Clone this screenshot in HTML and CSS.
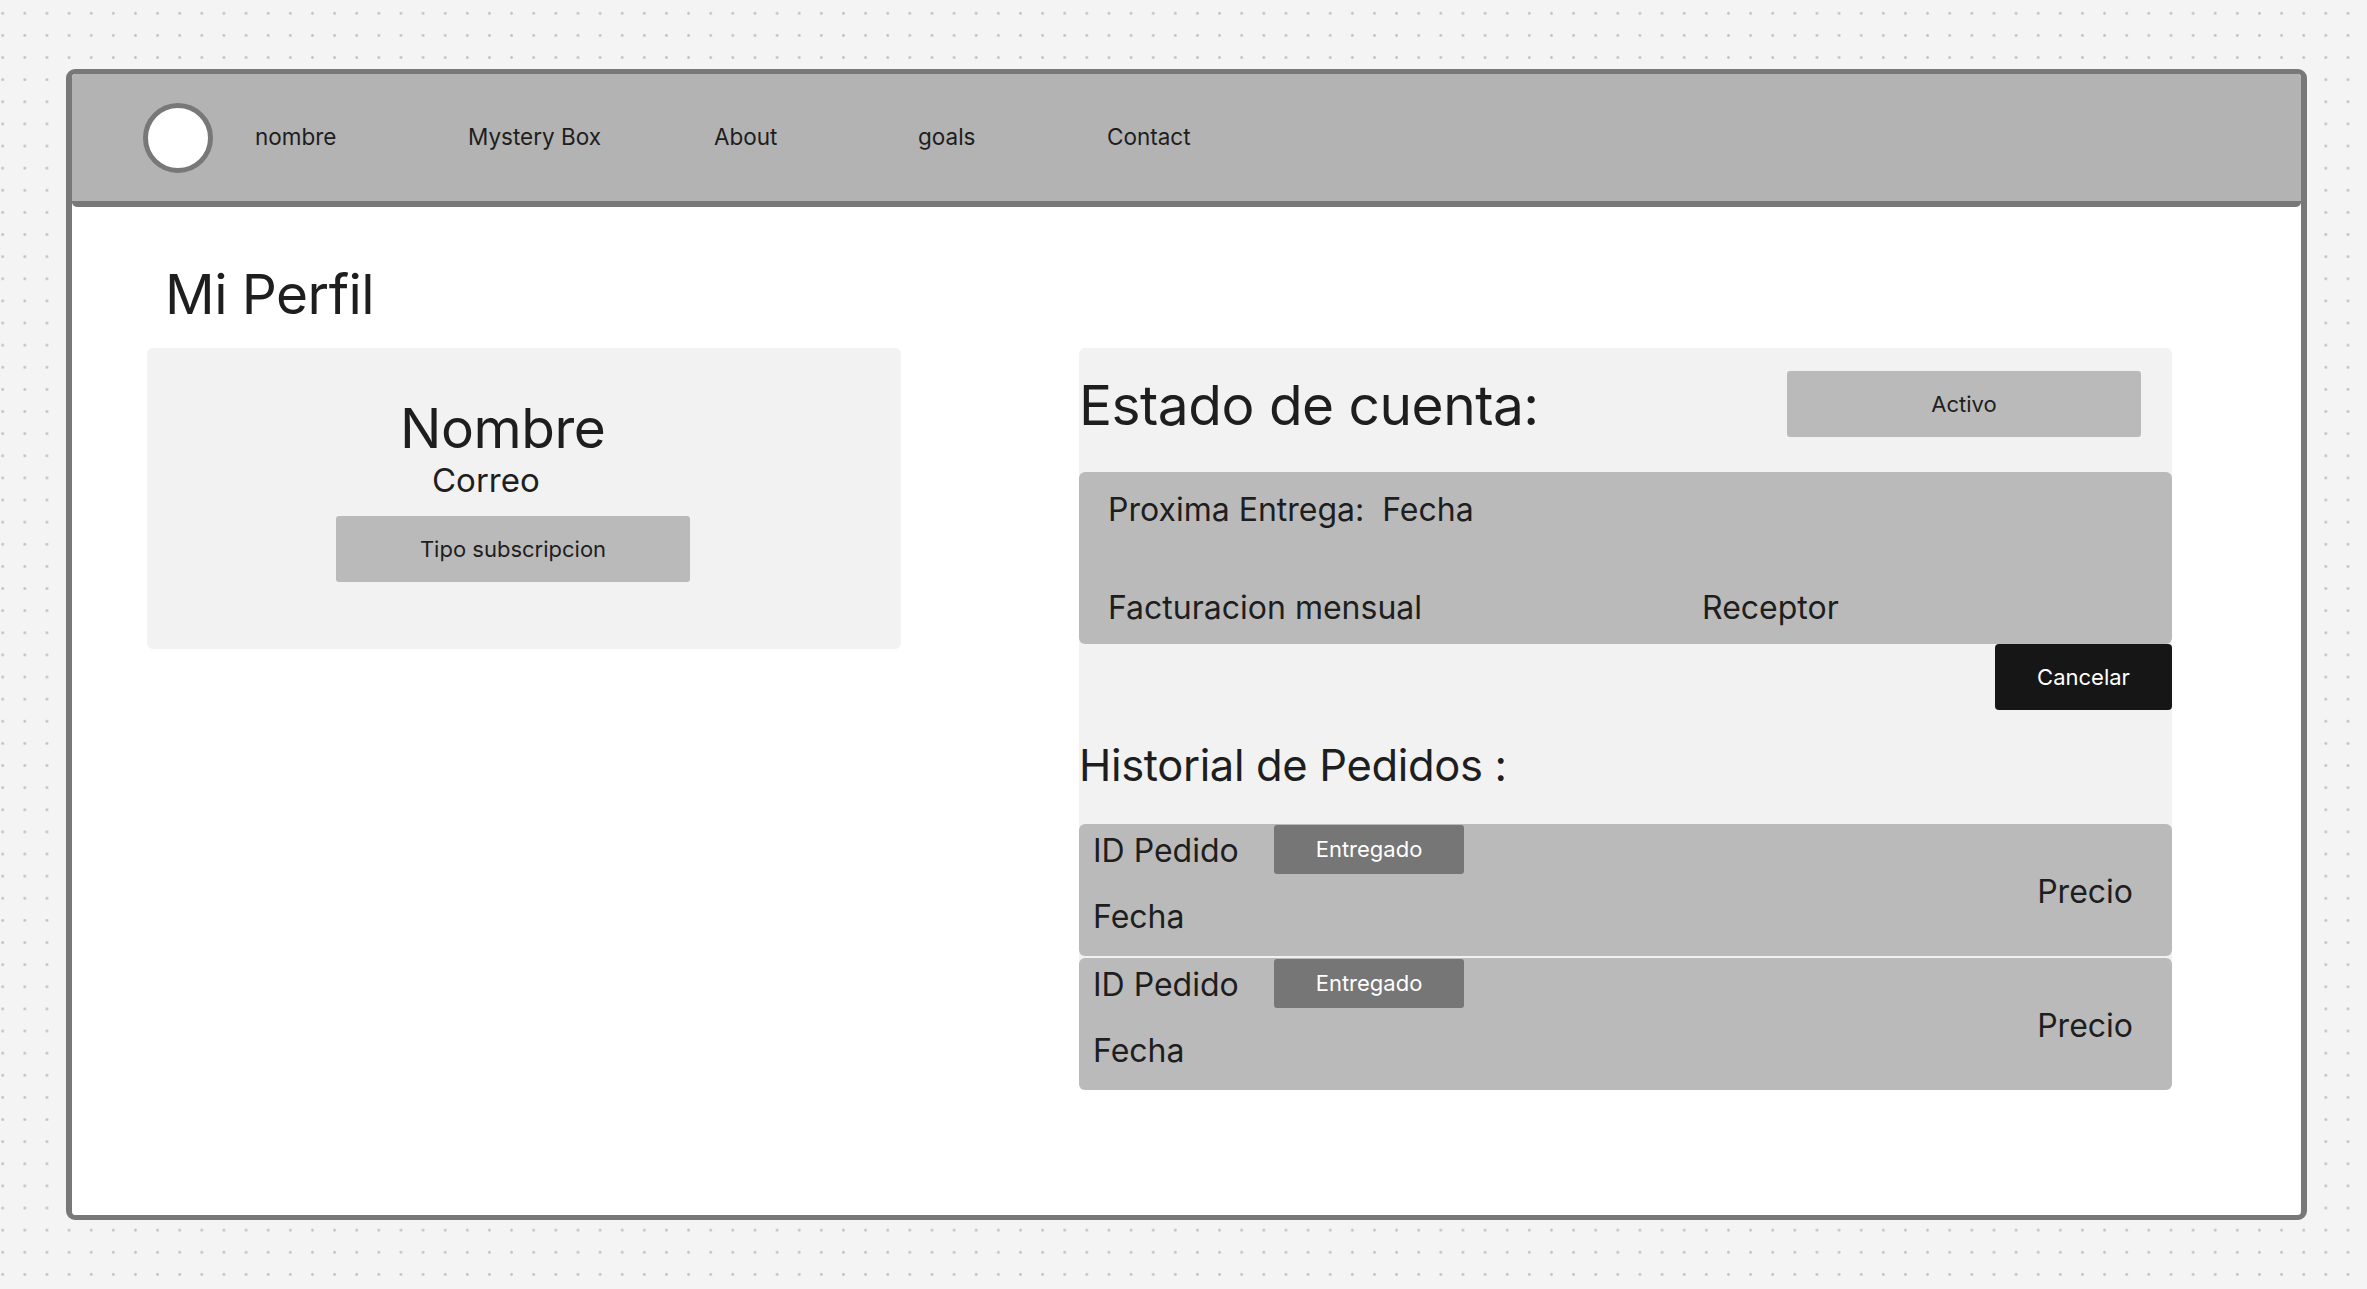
FILE: index.html
```html
<!DOCTYPE html>
<html lang="es">
<head>
<meta charset="utf-8">
<title>Mi Perfil</title>
<link rel="stylesheet" href="styles.css">
</head>
<body>
  <div class="frame">
    <header class="nav">
      <div class="avatar"></div>
      <nav class="links">
        <a class="link">nombre</a>
        <a class="link">Mystery Box</a>
        <a class="link">About</a>
        <a class="link">goals</a>
        <a class="link">Contact</a>
      </nav>
    </header>
    <main class="content">
      <h1 class="page-title">Mi Perfil</h1>
      <div class="columns">
        <section class="profile-card">
          <h2 class="profile-name">Nombre</h2>
          <p class="profile-email">Correo</p>
          <div class="btn btn-gray profile-plan">Tipo subscripcion</div>
        </section>
        <section class="account">
          <div class="account-head">
            <h2 class="section-title">Estado de cuenta:</h2>
            <div class="btn btn-gray status">Activo</div>
          </div>
          <div class="delivery">
            <p class="delivery-next">Proxima Entrega:&nbsp; Fecha</p>
            <div class="delivery-row">
              <span>Facturacion mensual</span>
              <span>Receptor</span>
            </div>
          </div>
          <div class="cancel-wrap">
            <button class="btn btn-dark">Cancelar</button>
          </div>
          <h2 class="history-title">Historial de Pedidos :</h2>
          <div class="orders">
            <div class="order">
              <div class="order-info">
                <div class="order-top">
                  <span class="order-id">ID Pedido</span>
                  <span class="badge">Entregado</span>
                </div>
                <span class="order-date">Fecha</span>
              </div>
              <span class="order-price">Precio</span>
            </div>
            <div class="order">
              <div class="order-info">
                <div class="order-top">
                  <span class="order-id">ID Pedido</span>
                  <span class="badge">Entregado</span>
                </div>
                <span class="order-date">Fecha</span>
              </div>
              <span class="order-price">Precio</span>
            </div>
          </div>
        </section>
      </div>
    </main>
  </div>
</body>
</html>
```

FILE: styles.css
```css
* {
  box-sizing: border-box;
}

html, body {
  height: 100%;
}

body {
  margin: 0;
  padding: 69px 0 0 66px;
  overflow: hidden;
  font-family: Inter, "Noto Sans", "Liberation Sans", sans-serif;
  color: #1e1e1e;
  background-color: #f4f4f4;
  background-image: radial-gradient(circle at center, #c4c4c4 0, #c4c4c4 1.1px, rgba(196,196,196,0) 1.7px);
  background-size: 22.13px 22.13px;
  background-position: -8.37px 2.23px;
}

.frame {
  width: 2241px;
  height: 1151px;
  background: #ffffff;
  border-style: solid;
  border-color: #787878;
  border-width: 5px 6px;
  border-radius: 9px;
  overflow: hidden;
}

/* ---------- nav ---------- */
.nav {
  height: 133px;
  background: #b3b3b3;
  border-bottom: 6px solid #787878;
  border-radius: 0 0 5px 5px;
  display: flex;
  align-items: center;
  padding-left: 71px;
}

.avatar {
  width: 70px;
  height: 70px;
  border-radius: 50%;
  border: 5px solid #787878;
  background: #ffffff;
  margin-right: 42px;
  flex: none;
}

.links {
  display: grid;
  grid-template-columns: 213px 246px 204px 189px auto;
  align-items: center;
}

.link {
  font-size: 22.5px;
  line-height: 1;
  color: #1e1e1e;
  text-decoration: none;
}

/* ---------- content ---------- */
.content {
  padding: 60px 0 0 75px;
}

.page-title {
  margin: 0 0 26px 18px;
  font-size: 55px;
  line-height: 1;
  font-weight: 400;
  letter-spacing: -0.01em;
}

.columns {
  display: flex;
  align-items: flex-start;
  gap: 178px;
}

/* profile card */
.profile-card {
  width: 754px;
  height: 301px;
  background: #f2f2f2;
  border-radius: 6px;
  padding-top: 53px;
}

.profile-name {
  margin: 0 0 0 253px;
  font-size: 55px;
  line-height: 1;
  font-weight: 400;
  letter-spacing: -0.008em;
}

.profile-email {
  margin: 8px 0 0 285px;
  font-size: 33px;
  line-height: 1;
}

.btn {
  display: flex;
  align-items: center;
  justify-content: center;
  font-family: inherit;
  font-size: 22px;
  line-height: 1;
  border: none;
  border-radius: 3px;
}

.btn-gray {
  background: #bababa;
  color: #1e1e1e;
}

.btn-dark {
  background: #161616;
  color: #ffffff;
  width: 177px;
  height: 66px;
  border-radius: 4px;
}

.profile-plan {
  width: 354px;
  height: 66px;
  margin: 19px 0 0 189px;
}

/* account panel */
.account {
  width: 1093px;
  background: #f2f2f2;
  border-radius: 6px;
}

.account-head {
  display: flex;
  justify-content: space-between;
  align-items: center;
  padding: 23px 31px 0 0;
}

.section-title {
  margin: 2px 0 0;
  font-size: 55px;
  line-height: 1;
  font-weight: 400;
  letter-spacing: -0.009em;
}

.status {
  width: 354px;
  height: 66px;
}

.delivery {
  margin-top: 35px;
  background: #bababa;
  border-radius: 6px;
  padding: 21.6px 29px 20.4px;
  font-size: 32px;
  line-height: 1;
}

.delivery-next {
  margin: 0 0 66.3px;
}

.delivery-row {
  display: grid;
  grid-template-columns: 594px auto;
}

.cancel-wrap {
  display: flex;
  justify-content: flex-end;
}

.history-title {
  margin: 33.5px 0 37px;
  font-size: 43.5px;
  line-height: 1;
  font-weight: 400;
  letter-spacing: -0.008em;
}

.orders {
  display: flex;
  flex-direction: column;
  gap: 2.3px;
}

.order {
  height: 131.7px;
  background: #bababa;
  border-radius: 6px;
  display: flex;
  justify-content: space-between;
  align-items: center;
  padding: 0 39px 0 14px;
  font-size: 32px;
  line-height: 1;
}

.order-info {
  align-self: flex-start;
  display: flex;
  flex-direction: column;
  padding-top: 0.7px;
}

.order-top {
  display: flex;
  align-items: center;
}

.order-id {
  width: 181px;
  padding-top: 3px;
}

.badge {
  width: 190px;
  height: 49px;
  background: #767676;
  color: #ffffff;
  border-radius: 3px;
  font-size: 22px;
  display: flex;
  align-items: center;
  justify-content: center;
}

.order-date {
  margin-top: 27px;
}

.order-price {
  margin-top: 4px;
}
```
